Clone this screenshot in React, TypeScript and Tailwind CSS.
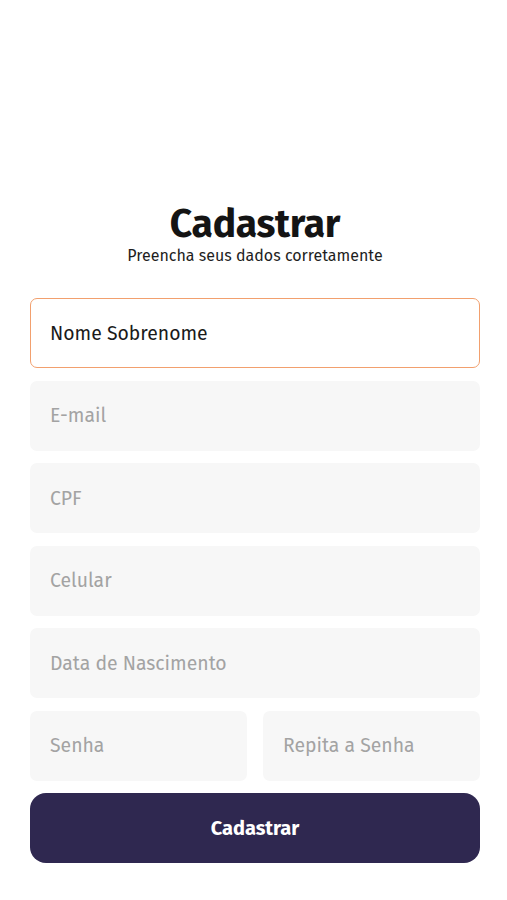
import { useState } from "react";

const FIELDS = ["E-mail", "CPF", "Celular", "Data de Nascimento"];

const inputBase =
  "h-[70px] w-full rounded-[7px] bg-[#f7f7f7] px-5 text-[19.4px] text-[#1a1a1a] placeholder:text-[#a3a3a3] outline-none";

export default function App() {
  const [name, setName] = useState("Nome Sobrenome");

  return (
    <div
      className="min-h-[900px] bg-white pl-[30px] pr-[27px] pt-[203px]"
      style={{ fontFamily: "'Fira Sans', 'Open Sans', 'Noto Sans', sans-serif" }}
    >
      <h1 className="text-center text-[39px] font-bold leading-[42px] tracking-[-0.3px] text-[#141414]">
        Cadastrar
      </h1>
      <p className="mt-[1px] text-center text-[16px] leading-[20px] text-[#1e1e1e]">
        Preencha seus dados corretamente
      </p>

      <form className="mt-[32px] flex flex-col gap-[12.5px]" onSubmit={(e) => e.preventDefault()}>
        <input
          value={name}
          onChange={(e) => setName(e.target.value)}
          className="h-[70px] w-full rounded-[7px] border border-[#f2a06e] bg-white px-[19px] text-[19.4px] text-[#1a1a1a] outline-none"
        />
        {FIELDS.map((f) => (
          <input key={f} placeholder={f} className={inputBase} />
        ))}
        <div className="flex gap-4">
          <input type="password" placeholder="Senha" className={inputBase} />
          <input type="password" placeholder="Repita a Senha" className={inputBase} />
        </div>
        <button
          type="submit"
          className="h-[70px] w-full rounded-[16px] bg-[#2f2850] text-[20px] font-bold text-white"
        >
          Cadastrar
        </button>
      </form>
    </div>
  );
}
